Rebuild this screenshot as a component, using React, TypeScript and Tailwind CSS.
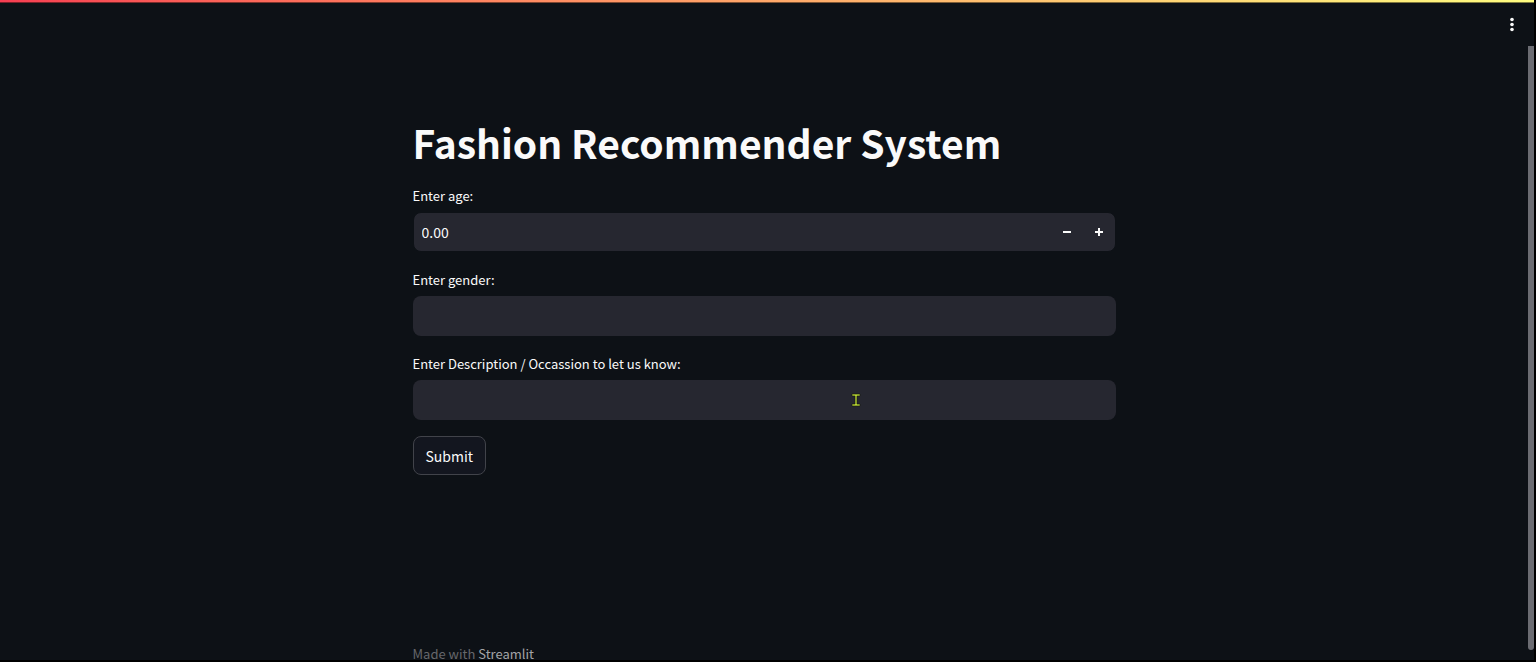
import { useState } from 'react'
import type { ReactNode } from 'react'

function Field({ id, label, children }: { id: string; label: string; children: ReactNode }) {
  return (
    <div className="flex flex-col gap-1">
      <label htmlFor={id} className="py-0.5 text-[13px] leading-5">
        {label}
      </label>
      {children}
    </div>
  )
}

function TextField({ id, label }: { id: string; label: string }) {
  return (
    <Field id={id} label={label}>
      <input id={id} type="text" className="h-10 w-full rounded-lg bg-[#262730] px-2 text-sm outline-none" />
    </Field>
  )
}

export default function App() {
  const [age, setAge] = useState(0)

  return (
    <div className="relative flex h-screen flex-col overflow-hidden border-r-2 border-b-2 border-black bg-[#0d1116] font-['Noto_Sans_CJK_SC',sans-serif] text-[#fafafa]">
      <div className="h-[3px] shrink-0 border-b border-black/50 bg-linear-to-r from-[#f63e52] to-[#fffd80]" />
      <header className="flex h-[43px] shrink-0 items-center justify-end pr-2.5">
        <button type="button" aria-label="Main menu" className="flex size-6 items-center justify-center">
          <svg viewBox="0 0 16 16" className="size-4" fill="currentColor" aria-hidden="true">
            <circle cx="8" cy="2.5" r="1.8" />
            <circle cx="8" cy="7.5" r="1.8" />
            <circle cx="8" cy="12.5" r="1.8" />
          </svg>
        </button>
      </header>

      <div className="flex min-h-0 flex-1">
        <div className="flex min-w-0 flex-1 flex-col items-center">
          <main className="flex w-full max-w-[735px] flex-1 flex-col px-4 pt-[70px]">
            <h1 className="text-[39px] leading-[52px] font-bold">Fashion Recommender System</h1>
            <form className="mt-4 flex flex-col gap-4" onSubmit={(e) => e.preventDefault()}>
              <Field id="age" label="Enter age:">
                <div className="flex h-10 rounded-lg border border-[#0d1116] bg-[#262730]">
                  <input
                    id="age"
                    type="text"
                    inputMode="decimal"
                    value={age.toFixed(2)}
                    onChange={(e) => setAge(Number(e.target.value) || 0)}
                    className="min-w-0 flex-1 bg-transparent px-2 text-sm outline-none"
                  />
                  <button
                    type="button"
                    aria-label="Decrease age"
                    onClick={() => setAge(age - 0.01)}
                    className="flex w-8 items-center justify-center"
                  >
                    <svg viewBox="0 0 8 8" className="size-2" fill="currentColor" aria-hidden="true">
                      <path d="M0 3h8v2H0z" />
                    </svg>
                  </button>
                  <button
                    type="button"
                    aria-label="Increase age"
                    onClick={() => setAge(age + 0.01)}
                    className="flex w-8 items-center justify-center"
                  >
                    <svg viewBox="0 0 8 8" className="size-2" fill="currentColor" aria-hidden="true">
                      <path d="M0 3h3V0h2v3h3v2H5v3H3V5H0z" />
                    </svg>
                  </button>
                </div>
              </Field>
              <TextField id="gender" label="Enter gender:" />
              <TextField id="description" label="Enter Description / Occassion to let us know:" />
              <button
                type="submit"
                className="h-[39px] self-start rounded-lg border border-[#41434a] bg-[#13161f] px-3 text-sm leading-6"
              >
                Submit
              </button>
            </form>
          </main>
          <footer className="h-4 w-full max-w-[735px] shrink-0 px-4 text-[13px] leading-5 text-[#66676b]">
            Made with{' '}
            <a href="#streamlit" className="text-[#a3a4a7]">
              Streamlit
            </a>
          </footer>
        </div>
        <div className="w-1.5 shrink-0 pb-2.5">
          <div className="h-full rounded-b-sm bg-[#6b6c72]" />
        </div>
      </div>

      <svg
        viewBox="0 0 10 14"
        className="pointer-events-none absolute top-[393px] left-[851px] h-3.5 w-2.5"
        fill="#b5d334"
        stroke="#15170c"
        strokeWidth="0.6"
        aria-hidden="true"
      >
        <path d="M1 1h8v2H6v8h3v2H1v-2h3V3H1z" />
      </svg>
    </div>
  )
}
